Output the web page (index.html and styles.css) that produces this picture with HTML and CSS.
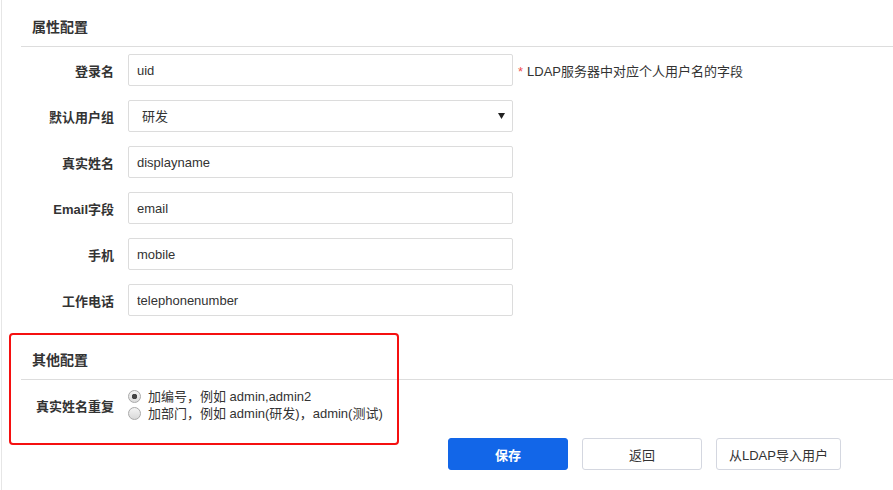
FILE: index.html
```html
<!DOCTYPE html>
<html lang="zh-CN">
<head>
  <meta charset="UTF-8" />
  <title>LDAP 配置</title>
  <link rel="stylesheet" href="styles.css">
</head>
<body>
  <div class="page">
    <section class="section">
      <h3 class="section-title">属性配置</h3>
      <div class="form-body">
        <div class="form-row">
          <label class="form-label">登录名</label>
          <input class="form-input" type="text" value="uid" />
          <span class="form-hint"><i>*</i>LDAP服务器中对应个人用户名的字段</span>
        </div>
        <div class="form-row">
          <label class="form-label">默认用户组</label>
          <select class="form-input form-select">
            <option>研发</option>
            <option>测试</option>
          </select>
        </div>
        <div class="form-row">
          <label class="form-label">真实姓名</label>
          <input class="form-input" type="text" value="displayname" />
        </div>
        <div class="form-row">
          <label class="form-label">Email字段</label>
          <input class="form-input" type="text" value="email" />
        </div>
        <div class="form-row">
          <label class="form-label">手机</label>
          <input class="form-input" type="text" value="mobile" />
        </div>
        <div class="form-row">
          <label class="form-label">工作电话</label>
          <input class="form-input" type="text" value="telephonenumber" />
        </div>
      </div>
    </section>

    <section class="section section-other">
      <h3 class="section-title">其他配置</h3>
      <div class="radio-row">
        <label class="form-label">真实姓名重复</label>
        <div class="radio-group">
          <label class="radio-item"><input type="radio" name="dup" checked /> 加编号，例如 admin,admin2</label>
          <label class="radio-item"><input type="radio" name="dup" /> 加部门，例如 admin(研发)，admin(测试)</label>
        </div>
      </div>
      <div class="mark-box"></div>
    </section>

    <div class="actions">
      <button class="btn btn-primary">保存</button>
      <button class="btn">返回</button>
      <button class="btn btn-wide">从LDAP导入用户</button>
    </div>
  </div>
</body>
</html>
```

FILE: styles.css
```css
* { box-sizing: border-box; margin: 0; padding: 0; }
html, body { height: 100%; background: #fff; }
body {
  font-family: "Liberation Sans", "Noto Sans CJK SC", sans-serif;
  font-size: 13px; color: #333;
  padding-left: 1px;
}

.page { min-height: 100%; border-left: 1px solid #e6e6e6; }

.section { margin-left: 19px; position: relative; }
.section-title {
  font-size: 14px; font-weight: 700; line-height: 17px; color: #333;
  padding: 19px 0 10px 11px;
  border-bottom: 1px solid #ddd;
}

.form-body { display: flex; flex-direction: column; gap: 14px; padding-top: 7px; }
.form-row { display: flex; align-items: center; height: 32px; }
.form-label {
  width: 93px; margin-right: 14px; text-align: right;
  font-weight: 700; color: #333;
}
.form-input {
  width: 385px; height: 32px; padding: 0 8px;
  border: 1px solid #dcdcdc; border-radius: 2px;
  font: inherit; color: #333; background: #fff; outline: none;
}
.form-select {
  appearance: none; -webkit-appearance: none; padding-left: 13px;
  background: #fff url("data:image/svg+xml,%3Csvg xmlns='http://www.w3.org/2000/svg' width='7' height='6'%3E%3Cpath d='M0 0h7L3.5 6z' fill='%23222'/%3E%3C/svg%3E") no-repeat right 7px center;
}
.form-hint { margin-left: 5px; color: #333; }
.form-hint i { font-style: normal; color: #f0504f; margin-right: 4px; }

.section-other { margin-top: 17px; }
.radio-row { display: flex; align-items: center; padding-top: 8px; }
.radio-group { display: flex; flex-direction: column; }
.radio-item { display: flex; align-items: center; gap: 7px; line-height: 17px; }
.radio-item input {
  appearance: none; -webkit-appearance: none;
  width: 13px; height: 13px; border-radius: 50%;
  border: 1px solid #a9a9a9;
  background: linear-gradient(#f4f4f4, #d8d8d8);
}
.radio-item input:checked {
  background: radial-gradient(circle, #444 0 2.5px, transparent 3px), linear-gradient(#f4f4f4, #dcdcdc);
}

.mark-box {
  position: absolute; top: 0; left: -12px;
  width: 390px; height: 112px;
  border: 2px solid #f51010; border-radius: 4px;
  pointer-events: none;
}

.actions { display: flex; gap: 14px; padding: 16px 0 0 446px; }
.btn {
  width: 120px; height: 32px; padding: 0 12px;
  border: 1px solid #d4d7e0; border-radius: 3px; background: #fff;
  font: inherit; color: #333; cursor: pointer;
}
.btn-primary { background: #1266e8; border-color: #1266e8; color: #fff; font-weight: 700; }
.btn-wide { width: auto; }
```
